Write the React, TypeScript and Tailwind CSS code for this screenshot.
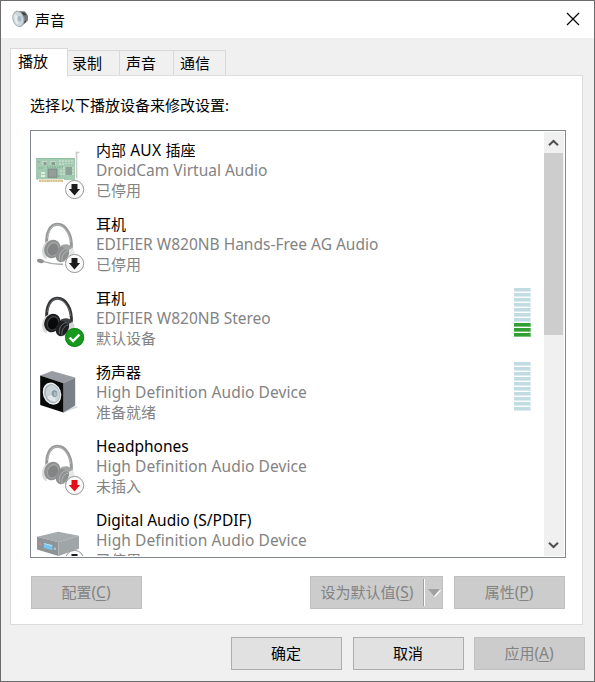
import type { ReactNode } from "react";

type BadgeKind = "down" | "unplugged" | "default";

function Badge({ kind }: { kind: BadgeKind }) {
  if (kind === "default") {
    return (
      <g>
        <circle cx="44.6" cy="49.5" r="9.6" fill="#159a1c" />
        <circle cx="44.6" cy="49.5" r="9" fill="none" stroke="#0b8212" strokeWidth="0.8" />
        <path d="M39.7 49.6l3.4 3.5 6.3-6.5" fill="none" stroke="#fff" strokeWidth="2.4" />
      </g>
    );
  }
  return (
    <g>
      <circle cx="44.6" cy="49.5" r="9.1" fill="#fafafa" stroke="#989898" strokeWidth="1" />
      <path
        d="M41.5 44h6v5.1h2.6l-5.6 6.4-5.6-6.4h2.6z"
        fill={kind === "down" ? "#1c1c1c" : "#e20d16"}
      />
    </g>
  );
}

function Card() {
  return (
    <g>
      <path d="M45.4 12.5h4M46.5 12.5v26" stroke="#c9ccca" strokeWidth="1.5" fill="none" />
      <path d="M47.5 14v24" stroke="#eee" strokeWidth="1" />
      <path d="M6.4 18H45v22H34v-1H8v1H6.4z" fill="#a3cbb1" />
      <path d="M6.4 18.5H45M6.8 18v21" stroke="#8cbc9f" strokeWidth="0.8" />
      <path d="M9 39.5h24V42H9z" fill="#d9c08e" />
      <path d="M11.5 40v2M14 40v2M16.5 40v2M20 40v2M22.5 40v2M25 40v2M27.5 40v2M30 40v2" stroke="#f4e8cf" strokeWidth="0.7" />
      <rect x="17.5" y="28.5" width="10" height="9.5" fill="#84958c" />
      <rect x="19" y="30" width="7" height="6.6" fill="#949f99" />
      <rect x="35.5" y="27" width="6.5" height="8" fill="#8da397" />
      <path d="M12 21h5v4h-5zM20.5 21h5v4h-5z" fill="#c5d9ce" />
      <path d="M13.5 22h3v3h-3zM21.5 22h3.5v3h-3.5z" fill="#899b92" />
      <path d="M11 32h4v2h-4zM11 35h4v2h-4z" fill="#e4ebe7" />
      <path d="M30 20v5M33 20v5M36 20v4M39 20v4M42 20v4M31 30v6M34 27v8M43 27v8" stroke="#dbe6df" strokeWidth="1.1" strokeDasharray="2 1" />
      <path d="M17 27h11M9 28h5M29 27h4M28 36h3M8 22h2" stroke="#7ba089" strokeWidth="1" strokeDasharray="1.5 1" />
    </g>
  );
}

function Headphones({ dark = false, mic = false }: { dark?: boolean; mic?: boolean }) {
  const band = dark ? "#333537" : "#979999";
  const cup = dark ? "#1d1e20" : "#8e9091";
  const ring = dark ? "#3d3f41" : "#a2a4a4";
  const hole = dark ? "#080909" : "#838585";
  return (
    <g>
      <path d="M16.8 30C16 19 20 10.6 27 10.3C36.5 10 42.4 22 41.3 35" fill="none" stroke={band} strokeWidth="3" />
      <path d="M17.5 24C18.5 16 22.4 10.6 27 10.7C34 10.9 39.8 20 40.6 28" fill="none" stroke={dark ? "#77797a" : "#bfc0c0"} strokeWidth="0.8" />
      <path d="M12.8 33c1.5-4.5 4.5-7 8.5-6.5l-5 19c-4-2-5-7-3.5-12.5z" fill="#d9dada" />
      <path d="M33 34c5-3.5 10.5-1.5 11.5 4.5.5 5.5-3 9.5-7.5 10l-6-1z" fill={dark ? "#d3d5d6" : "#e5e6e6"} />
      <ellipse cx="22.4" cy="35" rx="8" ry="9.4" transform="rotate(22 22.4 35)" fill={cup} />
      <ellipse cx="23" cy="35.2" rx="6.2" ry="7.5" transform="rotate(22 23 35.2)" fill={ring} />
      <ellipse cx="23" cy="35.5" rx="4.9" ry="6.1" transform="rotate(22 23 35.5)" fill={hole} />
      <ellipse cx="32.4" cy="39.8" rx="6.2" ry="8.8" transform="rotate(24 32.4 39.8)" fill={cup} />
      <path d="M30 32.5c4-3.5 10.5-2.5 12.3 1.5l-4.6 2.5c-2-2.5-4.7-3.5-7.7-4z" fill={ring} />
      <path d="M29.5 46c-1-6 2-10.5 7-11.5M32 47.5c-.8-5.5 2-9.5 6-10.5" fill="none" stroke={dark ? "#696c6e" : "#b4b6b6"} strokeWidth="1" />
      {mic && (
        <g>
          <path d="M33 50.2c-7 .4-13-.4-20-2.8" fill="none" stroke="#aaa" strokeWidth="1.5" />
          <ellipse cx="10.5" cy="47" rx="3.5" ry="2" transform="rotate(14 10.5 47)" fill="#8f8f8f" />
        </g>
      )}
    </g>
  );
}

function SpeakerBox() {
  return (
    <g>
      <path d="M33 49l12-5 4 1-16 6z" fill="#dcdddd" />
      <path d="M10.2 13.5L22 9l23.2 6.6-11.8 5.7z" fill="#999ca3" />
      <path d="M33.4 21.2l11.8-5.6v27.8l-11.8 7.2z" fill="#7b7f88" />
      <path d="M10.2 13.4l23.2 7.8v29.4L10.2 43z" fill="#080909" />
      <ellipse cx="22" cy="31.6" rx="9" ry="11.3" transform="rotate(-20 22 31.6)" fill="#eceeee" />
      <ellipse cx="22.1" cy="31.6" rx="7.7" ry="9.7" transform="rotate(-20 22.1 31.6)" fill="#a9b5ba" />
      <ellipse cx="22.7" cy="31.6" rx="6.6" ry="8.7" transform="rotate(-20 22.7 31.6)" fill="#c9d4d8" />
      <path d="M17 35l6-3 3 7c-4 1-7-1-9-4z" fill="#e1e7e9" />
      <ellipse cx="24.5" cy="31.6" rx="2.8" ry="3.4" fill="#8499a1" />
      <ellipse cx="25.1" cy="32" rx="1.6" ry="2.2" fill="#adbbc0" />
    </g>
  );
}

function Receiver() {
  return (
    <g>
      <path d="M7 26.8L28.2 21.7 49 25.7 28.5 32.3z" fill="#a6abad" />
      <path d="M7 26.8l21.5 5.5V46L7 39.4z" fill="#8e9496" />
      <path d="M28.5 32.3L49 25.7v13L28.5 46z" fill="#a0a5a7" />
      <path d="M13.8 33.2l8.6 2.1v5L13.8 38z" fill="#79c3ee" />
      <path d="M14 33.6l8.2 2" stroke="#b9e4fb" strokeWidth="1" />
      <circle cx="10.2" cy="34" r="1.4" fill="#c28a8a" />
      <circle cx="25" cy="38.8" r="1.3" fill="#bcc0c1" />
    </g>
  );
}

function Device({ icon, badge, name, desc, status, level, wide = false }: {
  icon: ReactNode;
  badge?: BadgeKind;
  name: ReactNode;
  desc: string;
  status: string;
  level?: number;
  wide?: boolean;
}) {
  return (
    <div className="flex h-[74px] shrink-0 items-start">
      <svg className="mr-[6px] mt-px h-[59px] w-[59px] shrink-0" viewBox="1 1 59 59">
        {icon}
        {badge && <Badge kind={badge} />}
      </svg>
      <div className="min-w-0 flex-1 whitespace-nowrap leading-5 text-[#838383]">
        <div className="h-5 text-black">{name}</div>
        <div className={`h-5 text-[15.5px] leading-5 ${wide ? "tracking-[0.09px]" : ""}`}>{desc}</div>
        <div className="h-5">{status}</div>
      </div>
      {level !== undefined && (
        <div className="mr-[13px] flex w-[17px] flex-col gap-px">
          {Array.from({ length: 10 }, (_, i) => (
            <div
              key={i}
              className={`h-1 border-r border-b ${
                i >= 10 - level ? "border-[#7cc17c] bg-[#31a033]" : "border-[#dcebef] bg-[#c2dce3]"
              }`}
            />
          ))}
        </div>
      )}
    </div>
  );
}

function Hotkey({ letter }: { letter: string }) {
  return (
    <span className="text-[15.5px]">
      (<span className="underline underline-offset-2">{letter}</span>)
    </span>
  );
}

function Button({ label, hotkey, disabled = false }: { label: string; hotkey?: string; disabled?: boolean }) {
  return (
    <button
      className={`flex h-[33px] w-[111px] items-center justify-center border pb-[2px] pr-px leading-5 ${
        disabled ? "border-[#bfbfbf] bg-[#cccccc] text-[#838383]" : "border-[#adadad] bg-[#e1e1e1] text-black"
      }`}
    >
      <span className="h-5">
        {label}
        {hotkey && <Hotkey letter={hotkey} />}
      </span>
    </button>
  );
}

export default function App() {
  return (
    <div className="flex h-[682px] w-[595px] flex-col overflow-hidden border border-[#6b6b6b] bg-[#f0f0f0] font-['Noto_Sans','Noto_Sans_CJK_SC',sans-serif] text-[15px] text-black">
      <header className="flex h-[37px] shrink-0 items-center bg-white pl-[11px] pr-[14px]">
        <svg className="-mt-px h-[18px] w-[17px]" viewBox="0 0 17 18">
          <path d="M7 1l6 .5 2.8 4v5L12 14l-4 3z" fill="#6b6e6f" />
          <path d="M10 2l4 2v8l-4 3z" fill="#3f4243" />
          <path d="M12 5l4 1v4l-4 1z" fill="#75787a" />
          <ellipse cx="6.4" cy="8.9" rx="5.9" ry="8.3" transform="rotate(-14 6.4 8.9)" fill="#a5a9aa" />
          <ellipse cx="6.2" cy="8.9" rx="4.9" ry="7.2" transform="rotate(-14 6.2 8.9)" fill="#ccd8dd" />
          <path d="M3 4l4 4-1 7C3 13 1.5 8 3 4z" fill="#e7eef0" />
          <ellipse cx="7.4" cy="8.7" rx="2" ry="2.8" fill="#a2b9c3" />
        </svg>
        <span className="ml-[6px] flex-1 leading-5">声音</span>
        <svg className="-mt-px h-[14px] w-[14px]" viewBox="0 0 14 14">
          <path d="M1 1l12 12M13 1L1 13" stroke="#000" strokeWidth="1.15" />
        </svg>
      </header>

      <div className="ml-[9px] mt-[10px] flex h-[28px] shrink-0 items-end">
        <div className="z-10 -mb-px flex h-[29px] w-[58px] items-start border border-b-0 border-[#d9d9d9] bg-white pl-[7px] pt-[2px] leading-5">播放</div>
        <div className="flex h-[26px] w-[52px] items-start border border-l-0 border-[#d9d9d9] pl-[4px] pt-[2px] leading-5">录制</div>
        <div className="flex h-[26px] w-[54px] items-start border border-l-0 border-[#d9d9d9] pl-[6px] pt-[2px] leading-5">声音</div>
        <div className="flex h-[26px] w-[52px] items-start border border-l-0 border-[#d9d9d9] pl-[6px] pt-[2px] leading-5">通信</div>
      </div>

      <main className="-mt-px ml-[9px] flex h-[550px] w-[573px] shrink-0 flex-col border border-[#dcdcdc] bg-white pl-[19px] pt-[19px]">
        <div className="h-[35px] shrink-0 leading-5">选择以下播放设备来修改设置:</div>
        <div className="flex h-[428px] w-[536px] shrink-0 border border-[#82878f] py-px pr-px">
          <div className="flex min-w-0 flex-1 flex-col overflow-hidden pt-[8px]">
            <Device
              icon={<Card />}
              badge="down"
              name={<>内部<span className="text-[15.5px] tracking-[0.2px]"> AUX </span>插座</>}
              desc="DroidCam Virtual Audio"
              status="已停用"
            />
            <Device icon={<Headphones mic />} badge="down" name="耳机" desc="EDIFIER W820NB Hands-Free AG Audio" status="已停用" />
            <Device icon={<Headphones dark />} badge="default" name="耳机" desc="EDIFIER W820NB Stereo" status="默认设备" level={3} />
            <Device icon={<SpeakerBox />} name="扬声器" desc="High Definition Audio Device" status="准备就绪" level={0} wide />
            <Device
              icon={<Headphones />}
              badge="unplugged"
              name={<span className="text-[15.5px]">Headphones</span>}
              desc="High Definition Audio Device"
              status="未插入"
              wide
            />
            <Device
              icon={<Receiver />}
              badge="down"
              name={<span className="text-[15.5px]">Digital Audio (S/PDIF)</span>}
              desc="High Definition Audio Device"
              status="已停用"
              wide
            />
          </div>
          <div className="flex w-[20px] shrink-0 flex-col bg-[#f0f0f0]">
            <div className="flex h-[21px] items-center justify-center pr-px">
              <svg className="h-[8px] w-[11px]" viewBox="0 0 11 8">
                <path d="M1 6.3L5.5 2 10 6.3" fill="none" stroke="#505050" strokeWidth="2" />
              </svg>
            </div>
            <div className="h-[182px] w-[19px] bg-[#cdcdcd]" />
            <div className="flex-1" />
            <div className="flex h-[21px] items-center justify-center pb-px pr-px">
              <svg className="h-[8px] w-[11px]" viewBox="0 0 11 8">
                <path d="M1 1.7L5.5 6 10 1.7" fill="none" stroke="#505050" strokeWidth="2" />
              </svg>
            </div>
          </div>
        </div>
        <div className="mt-[18px] flex w-[535px] pl-px">
          <Button label="配置" hotkey="C" disabled />
          <div className="ml-auto flex h-[33px] w-[133px] items-center border border-[#bfbfbf] bg-[#cccccc] leading-5 text-[#838383]">
            <span className="mb-[2px] h-5 flex-1 whitespace-nowrap text-center">设为默认值<Hotkey letter="S" /></span>
            <span className="h-[27px] w-[2px] border-l border-r border-l-[#a0a0a0] border-r-white" />
            <svg className="ml-[2px] mr-[1px] h-[10px] w-[14px]" viewBox="0 0 14 10">
              <path d="M13 1.5L14 2.5 8 9 7 8z" fill="#fff" />
              <path d="M1 1h12L7 8z" fill="#a0a0a0" />
            </svg>
          </div>
          <div className="ml-[11px]"><Button label="属性" hotkey="P" disabled /></div>
        </div>
      </main>

      <footer className="mt-[12px] flex justify-end pr-[9px]">
        <div className="mr-[11px]"><Button label="确定" /></div>
        <div className="mr-[10px]"><Button label="取消" /></div>
        <Button label="应用" hotkey="A" disabled />
      </footer>
    </div>
  );
}
